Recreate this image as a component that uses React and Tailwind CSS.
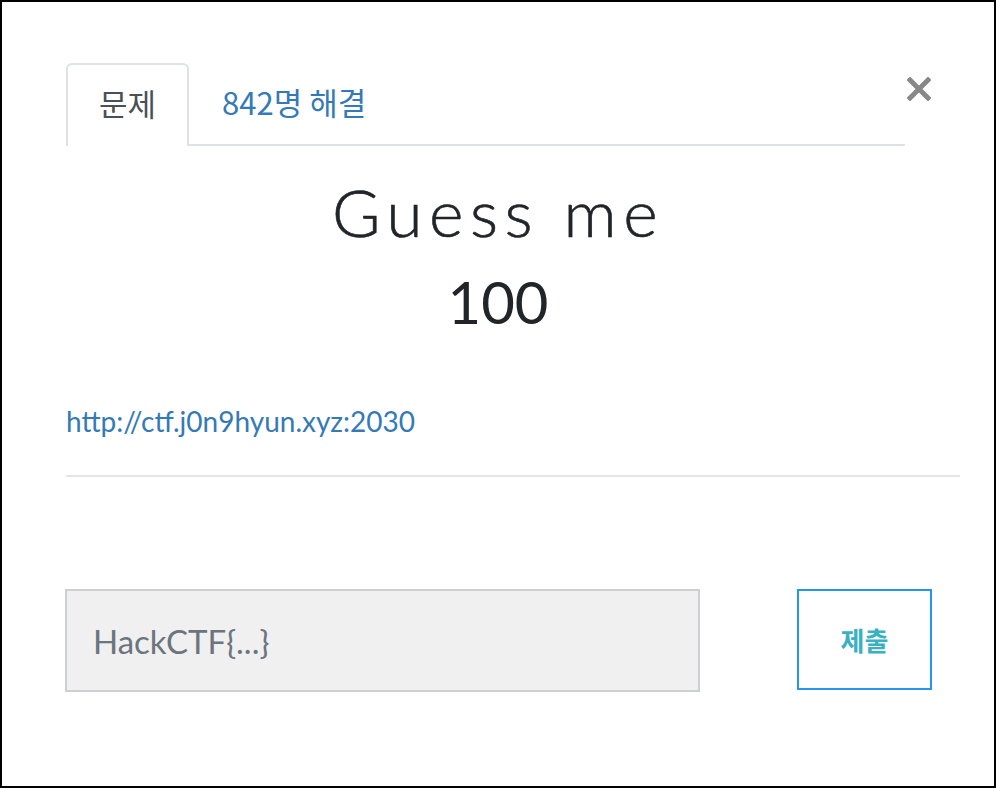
export default function App() {
  return (
    <div className="w-[996px] h-[788px] border-2 border-black bg-white box-border font-['Lato','Noto_Sans_CJK_KR',sans-serif] text-[#212529]">
      <div className="pl-[64px] pr-[64px] pt-[61px] flex flex-col">
        {/* Header tabs + close */}
        <div className="flex items-start mr-[-30px]">
          <div className="flex flex-1 border-b-2 border-[#dee2e6] h-[83px]">
            <div className="h-[83px] px-[31px] pb-[4px] flex items-center border-2 border-b-0 border-[#dee2e6] rounded-t-[6px] bg-white text-[31px] text-[#495057] font-['Noto_Sans_CJK_KR',sans-serif] mb-[-2px] relative">
              문제
            </div>
            <div className="h-[83px] px-[31px] pb-[4px] flex items-center border-2 border-transparent text-[31px] text-[#337ab7] font-['Noto_Sans_CJK_KR',sans-serif]">
              842명 해결
            </div>
          </div>
          <div className="w-[55px] flex justify-start pt-[14px] pl-[2px]">
            <svg width="24" height="24" viewBox="0 0 24 24">
              <path d="M3 3 L21 21 M21 3 L3 21" stroke="#888888" strokeWidth="5" strokeLinecap="square" />
            </svg>
          </div>
        </div>

        {/* Title */}
        <div className="mt-[33px] text-center text-[66px] leading-none font-light tracking-[6.5px] text-[#212529] [-webkit-text-stroke:0.6px_#212529]">
          Guess me
        </div>
        <div className="mt-[28px] text-center text-[58px] leading-none font-normal text-[#212529]">
          100
        </div>

        {/* Link */}
        <div className="mt-[76px] text-[28px] leading-none">
          <a href="#" className="text-[#337ab7] no-underline">http://ctf.j0n9hyun.xyz:2030</a>
        </div>

        <div className="mt-[40px] h-[2px] bg-[#e5e5e5] mr-[-30px]"></div>

        {/* Form */}
        <div className="mt-[112px] flex items-start justify-between ml-[-1px] mr-[-2px]">
          <input
            type="text"
            placeholder="HackCTF{...}"
            className="w-[635px] h-[103px] bg-[#f0f0f0] border-2 border-[#ccd0d5] pl-[26px] text-[33px] text-[#495057] placeholder:text-[#6c757d] outline-none font-['Lato',sans-serif]"
          />
          <button className="w-[135px] h-[101px] border-2 border-[#2196f3] bg-white flex items-center justify-center text-[26px] font-bold text-[#3ab0c3] font-['Noto_Sans_CJK_KR',sans-serif]">
            제출
          </button>
        </div>
      </div>
    </div>
  );
}
